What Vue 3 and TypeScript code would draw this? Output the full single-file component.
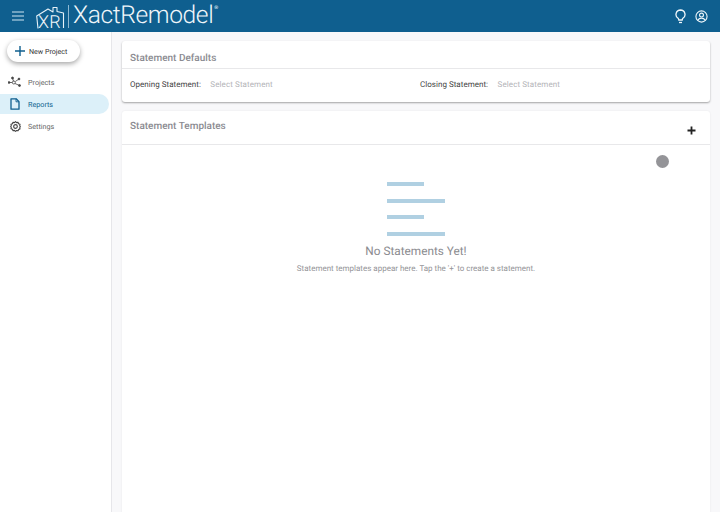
<script setup lang="ts">
const navItems = [
  { label: 'Projects', icon: 'projects', active: false },
  { label: 'Reports', icon: 'reports', active: true },
  { label: 'Settings', icon: 'settings', active: false },
]
const bars = [37, 58, 37, 58]
</script>

<template>
  <div class="app">
    <header class="topbar">
      <button class="menu" aria-label="Menu">
        <svg width="12" height="10" viewBox="0 0 12 10"><path d="M0 1h12M0 5h12M0 9h12" stroke="#cfe6f2" stroke-width="1.2" fill="none" /></svg>
      </button>
      <div class="logo">
        <div class="mark">
          <svg width="29" height="24" viewBox="0 0 29 24" fill="none" stroke="#e8f2f8" stroke-width="1.1">
            <path d="M2 22.500 L.7 10 L12 3 L17 6 L17 1.500 L21 1.500 L21 5.500 L27.500 7 L27.500 22" stroke-linejoin="round" />
          </svg>
          <span class="xr">XR</span>
        </div>
        <span class="divider"></span>
        <span class="brand">XactRemodel</span><sup class="reg">®</sup>
      </div>
      <div class="actions">
        <svg width="11" height="15" viewBox="0 0 11 15" fill="none" stroke="#eef6fa" stroke-width="1.300">
          <path d="M5.500 1a4.500 4.500 0 0 0-2.400 8.300c.5.4.6 1 .7 1.700h3.400c.1-.7.2-1.300.7-1.700A4.500 4.500 0 0 0 5.500 1Z" />
          <path d="M4 13.500h3" />
        </svg>
        <svg width="13" height="13" viewBox="0 0 14 14" fill="none" stroke="#eef6fa" stroke-width="1.200">
          <circle cx="7" cy="7" r="6" />
          <circle cx="7" cy="5.500" r="2.100" />
          <path d="M3 11c1-1.700 2.500-2.200 4-2.200s3 .5 4 2.200" />
        </svg>
      </div>
    </header>

    <div class="body">
      <aside class="sidebar">
        <button class="new-project">
          <svg width="12" height="12" viewBox="0 0 12 12"><path d="M6 1v10M1 6h10" stroke="#0f5f8f" stroke-width="1.400" fill="none" /></svg>
          <span>New Project</span>
        </button>
        <nav class="nav">
          <div v-for="item in navItems" :key="item.label" class="nav-item" :class="{ active: item.active }">
            <span class="nav-icon">
              <svg v-if="item.icon === 'projects'" width="14" height="12" viewBox="0 0 14 12" fill="#444" stroke="#444" stroke-width=".8">
                <path d="M1 6.500h3.300M4.500 2l1 3.300M7.300 5.500L11 3M7 7.500l4.500 2" fill="none" />
                <circle cx="1" cy="6.500" r=".9" /><circle cx="4.500" cy="2" r="1" /><circle cx="5.800" cy="6.500" r="1.500" fill="none" />
                <circle cx="11" cy="3" r=".9" /><circle cx="11.500" cy="9.500" r="1" />
              </svg>
              <svg v-else-if="item.icon === 'reports'" width="10" height="12" viewBox="0 0 10 12" fill="none" stroke="#0f5f8f" stroke-width="1.300">
                <path d="M1 .8h5.200L9 3.600v7.600H1Z" stroke-linejoin="round" />
                <path d="M6 .8v3h3" stroke-width=".9" />
              </svg>
              <svg v-else width="11" height="11" viewBox="0 0 12 12" fill="none" stroke="#444" stroke-width="1.200">
                <path d="M6 .7l1.200 1.100 1.600-.3.600 1.500 1.500.6-.3 1.600L11.300 6l-.7 1.300.3 1.300-1.500.6-.6 1.500-1.600-.3L6 11.300l-1.200-1.100-1.600.3-.6-1.500-1.500-.6.3-1.300L.7 6l.7-.8-.3-1.600 1.500-.6.600-1.500 1.600.3Z" stroke-linejoin="round" />
                <circle cx="6" cy="6" r="2" />
              </svg>
            </span>
            <span class="nav-label">{{ item.label }}</span>
          </div>
        </nav>
      </aside>

      <main class="main">
        <section class="card defaults">
          <div class="card-head"><h2>Statement Defaults</h2></div>
          <div class="fields">
            <div class="field"><span class="field-label">Opening Statement:</span><span class="placeholder">Select Statement</span></div>
            <div class="field"><span class="field-label">Closing Statement:</span><span class="placeholder">Select Statement</span></div>
          </div>
        </section>

        <section class="card templates">
          <div class="card-head tall">
            <h2>Statement Templates</h2>
            <svg class="add" width="9" height="9" viewBox="0 0 9 9"><path d="M4.500 .5v8M.5 4.500h8" stroke="#222" stroke-width="1.800" fill="none" /></svg>
          </div>
          <div class="empty">
            <span class="dot"></span>
            <div class="bars">
              <i v-for="(w, i) in bars" :key="i" :style="{ width: w + 'px' }"></i>
            </div>
            <h3>No Statements Yet!</h3>
            <p>Statement templates appear here. Tap the '+' to create a statement.</p>
          </div>
        </section>
      </main>
    </div>
  </div>
</template>

<style>
html, body { margin: 0; background: #fff; }
</style>

<style scoped>
.app {
  width: 720px;
  height: 512px;
  overflow: hidden;
  display: flex;
  flex-direction: column;
  font-family: Roboto, "Liberation Sans", sans-serif;
  text-rendering: geometricPrecision;
}
.topbar {
  height: 32px;
  flex: none;
  background: #0f5f8f;
  display: flex;
  align-items: center;
}
.menu {
  border: 0;
  background: none;
  padding: 0;
  margin-left: 12px;
  width: 12px;
  height: 10px;
  display: flex;
}
.logo {
  display: flex;
  align-items: center;
  margin-left: 12px;
  color: #f0f6fa;
}
.mark {
  position: relative;
  width: 29px;
  height: 24px;
  margin-top: 4px;
}
.xr {
  position: absolute;
  left: 2px;
  top: 8px;
  font-size: 18px;
  line-height: 18px;
  font-weight: 300;
  letter-spacing: .2px;
  color: #f0f6fa;
}
.divider {
  width: 1px;
  height: 23px;
  background: #8fb9d2;
  margin: 0 4px 0 3px;
}
.brand {
  font-size: 24.600px;
  font-weight: 300;
  line-height: 32px;
  letter-spacing: -.4px;
}
.reg {
  font-size: 5px;
  line-height: 1;
  align-self: flex-start;
  margin-top: 6px;
  margin-left: 1px;
}
.actions {
  margin-left: auto;
  margin-right: 12px;
  display: flex;
  align-items: center;
  gap: 9px;
}
.body {
  flex: 1;
  display: flex;
  min-height: 0;
}
.sidebar {
  width: 111px;
  flex: none;
  background: #fff;
  border-right: 1px solid #e6e6ea;
  padding-top: 8px;
}
.new-project {
  margin-left: 7px;
  width: 73px;
  height: 22px;
  border: 0;
  border-radius: 11px;
  background: #fff;
  box-shadow: 0 2px 5px rgba(0, 0, 0, .35);
  display: flex;
  align-items: center;
  gap: 3px;
  padding: 0 0 0 7px;
  font: 400 7.100px Roboto, sans-serif;
  text-rendering: geometricPrecision;
  color: #333;
  white-space: nowrap;
}
.nav {
  margin-top: 10px;
  display: flex;
  flex-direction: column;
  gap: 2px;
}
.nav-item {
  height: 20px;
  width: 109px;
  display: flex;
  align-items: center;
  border-radius: 0 10px 10px 0;
  font-size: 7.200px;
  color: #666;
}
.nav-item.active {
  background: #dcf0f9;
  color: #0f5f8f;
}
.nav-icon {
  width: 14px;
  margin-left: 8px;
  display: flex;
  justify-content: center;
}
.nav-label {
  margin-left: 6px;
}
.main {
  flex: 1;
  background: #f8f8fa;
  padding: 9px 10px 0;
  display: flex;
  flex-direction: column;
  gap: 9px;
  min-width: 0;
}
.card {
  background: #fff;
  border-radius: 3px;
}
.defaults {
  height: 61px;
  flex: none;
  box-shadow: 0 1px 2px rgba(0, 0, 0, .35);
}
.templates {
  flex: 1;
  box-shadow: 0 0 2px rgba(0, 0, 0, .08);
  margin-bottom: -4px;
}
.card-head {
  height: 28px;
  box-sizing: border-box;
  border-bottom: 1px solid #e8e8ea;
  display: flex;
  align-items: center;
  padding: 8px 8px 0;
}
.card-head.tall {
  height: 34px;
  position: relative;
  padding-top: 0;
  padding-bottom: 2px;
}
h2 {
  margin: 0;
  font-size: 10px;
  font-weight: 500;
  color: #8b8b91;
}
.add {
  position: absolute;
  right: 14px;
  top: 15px;
}
.fields {
  display: flex;
  padding: 10px 8px 0;
}
.field {
  width: 290px;
  flex: none;
  display: flex;
  gap: 9.500px;
  font-size: 8px;
  line-height: 12px;
  letter-spacing: .03px;
}
.field-label {
  color: #444;
}
.placeholder {
  color: #b4b4b8;
  letter-spacing: .1px;
}
.empty {
  position: relative;
  display: flex;
  flex-direction: column;
  align-items: center;
  padding-top: 37px;
}
.dot {
  position: absolute;
  right: 41px;
  top: 10px;
  width: 13px;
  height: 13px;
  border-radius: 50%;
  background: #949498;
}
.bars {
  width: 58px;
  display: flex;
  flex-direction: column;
  gap: 12.500px;
  margin-left: -1px;
}
.bars i {
  display: block;
  height: 4px;
  background: #b0d0e2;
}
h3 {
  margin: 7px 0 0;
  font-size: 11.800px;
  line-height: 16px;
  font-weight: 400;
  color: #8b8b8f;
}
p {
  margin: 4px 0 0;
  font-size: 8px;
  line-height: 12px;
  color: #949498;
}
</style>
